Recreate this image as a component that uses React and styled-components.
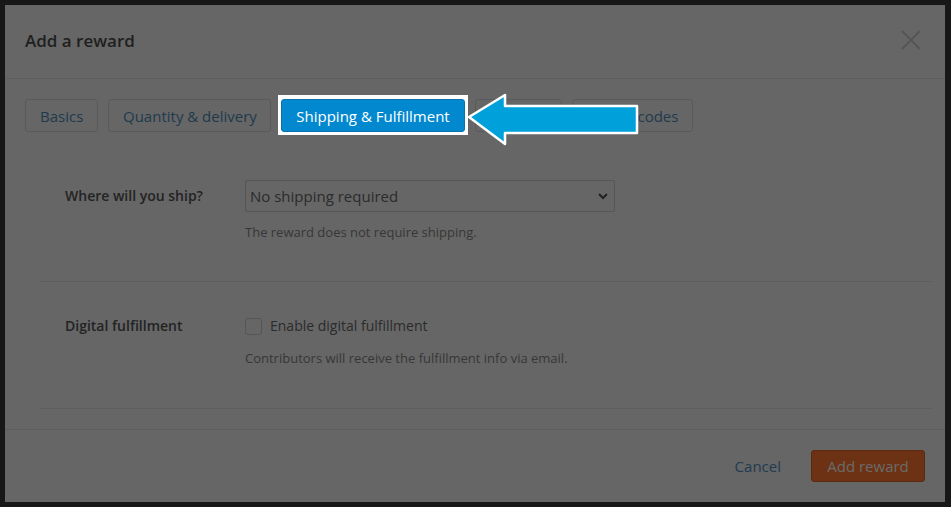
import React from 'react'
import styled, { createGlobalStyle } from 'styled-components'

const GlobalStyle = createGlobalStyle`
  html, body {
    margin: 0;
    padding: 0;
    background: #171717;
  }
  body {
    font-family: "Open Sans", "Noto Sans", sans-serif;
  }
`

const Stage = styled.div`
  width: 951px;
  height: 507px;
  padding: 5px 6px 5px 5px;
  box-sizing: border-box;
`

const Modal = styled.div`
  width: 940px;
  height: 497px;
  background: #666666;
  display: flex;
  flex-direction: column;
`

const Header = styled.header`
  height: 73px;
  flex-shrink: 0;
  display: flex;
  align-items: center;
  justify-content: space-between;
  padding: 0 20px;
  border-bottom: 1px solid #5d5d5d;
`

const Title = styled.h2`
  margin: 0;
  font-size: 17px;
  font-weight: 600;
  color: #1f1f1f;
  position: relative;
  top: -1px;
`

const CloseButton = styled.button`
  background: none;
  border: 0;
  padding: 0;
  width: 22px;
  height: 22px;
  display: flex;
  align-items: center;
  justify-content: center;
  margin-right: 3px;
  position: relative;
  top: -2px;
`

const Body = styled.div`
  flex: 1;
  padding: 20px 20px 0;
`

const TabBar = styled.nav`
  position: relative;
  display: flex;
  gap: 10px;
`

const Spotlight = styled.span`
  display: flex;
  background: #ffffff;
  padding: 4px 3px 3px;
  margin: -4px -3px -3px;
  position: relative;
  z-index: 1;
`

const Tab = styled.button`
  height: 33px;
  box-sizing: border-box;
  padding: 0 14px;
  font-family: inherit;
  font-size: 15px;
  border-radius: 3px;
  border: 1px solid ${p => (p.$active ? '#0a73ad' : '#5a5a5a')};
  background: ${p => (p.$active ? '#0288cf' : 'transparent')};
  color: ${p => (p.$active ? '#ffffff' : '#1f3a4d')};
  width: ${p => p.$w}px;
  text-align: ${p => p.$align || 'center'};
  white-space: nowrap;
  overflow: hidden;
`

const Arrow = styled.svg`
  position: absolute;
  left: 440px;
  top: -7px;
  overflow: visible;
  z-index: 2;
`

const Form = styled.div`
  margin: 0 -7px 0 15px;
`

const Row = styled.div`
  display: grid;
  grid-template-columns: 180px 1fr;
  padding: ${p => p.$pad};
  border-bottom: 1px solid #5e5e5e;
  padding-left: 25px;
`

const Label = styled.label`
  font-size: 14px;
  font-weight: 600;
  color: #232323;
  line-height: 20px;
  padding-top: ${p => p.$top || 0}px;
`

const Field = styled.div`
  display: flex;
  flex-direction: column;
`

const Select = styled.div`
  width: 370px;
  height: 32px;
  box-sizing: border-box;
  border: 1px solid #555555;
  border-radius: 2px;
  display: flex;
  align-items: center;
  justify-content: space-between;
  padding: 0 6px 0 4px;
  font-size: 15px;
  color: #2b2b2b;
`

const Help = styled.p`
  margin: ${p => p.$mt}px 0 0;
  font-size: 13px;
  line-height: 18px;
  color: #373737;
`

const CheckLine = styled.label`
  display: flex;
  align-items: center;
  gap: 8px;
  font-size: 14px;
  line-height: 20px;
  color: #2b2b2b;
`

const Box = styled.span`
  width: 17px;
  height: 17px;
  box-sizing: border-box;
  border: 1px solid #555555;
  border-radius: 3px;
`

const Footer = styled.footer`
  height: 73px;
  flex-shrink: 0;
  border-top: 1px solid #5d5d5d;
  box-sizing: border-box;
  display: flex;
  align-items: center;
  justify-content: flex-end;
  gap: 30px;
  padding: 0 20px 0 0;
`

const LinkButton = styled.button`
  background: none;
  border: 0;
  padding: 0;
  font-family: inherit;
  font-size: 15px;
  color: #213b50;
`

const PrimaryButton = styled.button`
  width: 114px;
  height: 32px;
  border-radius: 3px;
  border: 1px solid #5c2a0e;
  background: #6d3214;
  color: #6b6b6b;
  font-family: inherit;
  font-size: 15px;
`

export default function App() {
  return (
    <Stage>
      <GlobalStyle />
      <Modal>
        <Header>
          <Title>Add a reward</Title>
          <CloseButton aria-label="Close">
            <svg width="20" height="20" viewBox="0 0 20 20">
              <path d="M1 1 L19 19 M19 1 L1 19" stroke="#555555" strokeWidth="2" />
            </svg>
          </CloseButton>
        </Header>
        <Body>
          <TabBar>
            <Tab $w={73}>Basics</Tab>
            <Tab $w={163}>Quantity &amp; delivery</Tab>
            <Spotlight>
              <Tab $active $w={184}>Shipping &amp; Fulfillment</Tab>
            </Spotlight>
            <Tab $w={87}>Options</Tab>
            <Tab $w={121} $align="right">Access codes</Tab>
            <Arrow width="176" height="56" viewBox="0 0 176 56">
              <polygon
                points="4,25 40,3 40,14 172,14 172,41 40,41 40,52"
                fill="#00a0da"
                stroke="#ffffff"
                strokeWidth="2.5"
                strokeLinejoin="round"
              />
            </Arrow>
          </TabBar>
          <Form>
            <Row $pad="48px 0 40px">
              <Label $top={6}>Where will you ship?</Label>
              <Field>
                <Select>
                  <span>No shipping required</span>
                  <svg width="10" height="7" viewBox="0 0 10 7">
                    <path d="M1 1 L5 5 L9 1" fill="none" stroke="#222222" strokeWidth="2" />
                  </svg>
                </Select>
                <Help $mt={11}>The reward does not require shipping.</Help>
              </Field>
            </Row>
            <Row $pad="34px 0 41px">
              <Label>Digital fulfillment</Label>
              <Field>
                <CheckLine>
                  <Box />
                  Enable digital fulfillment
                </CheckLine>
                <Help $mt={13}>Contributors will receive the fulfillment info via email.</Help>
              </Field>
            </Row>
          </Form>
        </Body>
        <Footer>
          <LinkButton>Cancel</LinkButton>
          <PrimaryButton>Add reward</PrimaryButton>
        </Footer>
      </Modal>
    </Stage>
  )
}
